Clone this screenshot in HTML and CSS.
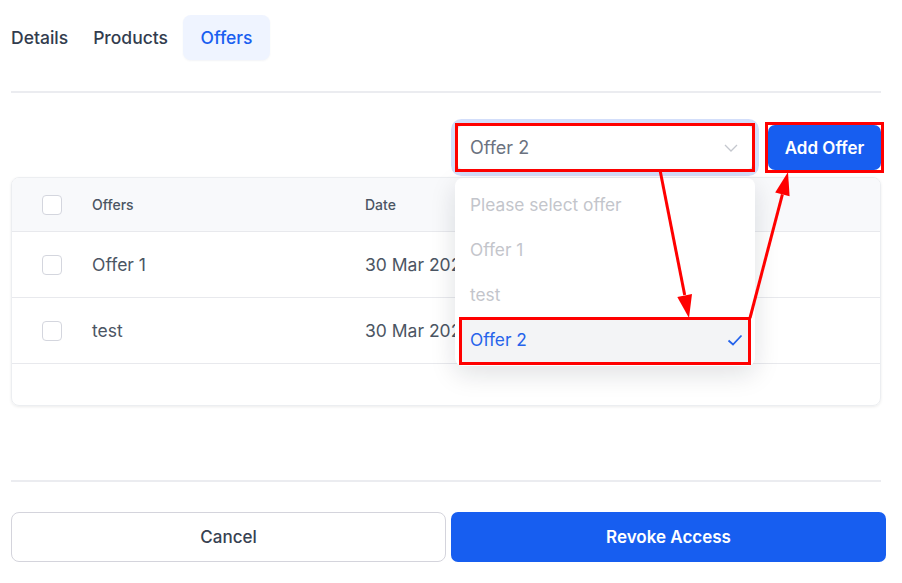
FILE: index.html
```html
<!DOCTYPE html>
<html lang="en">
<head>
  <meta charset="UTF-8">
  <meta name="viewport" content="width=device-width, initial-scale=1">
  <title>Offers</title>
  <link rel="stylesheet" href="styles.css">
</head>
<body>

  <div class="page">
    <!-- tabs -->
    <div class="tabs">
      <span class="tab">Details</span>
      <span class="tab">Products</span>
      <span class="tab active">Offers</span>
    </div>

    <div class="divider"></div>

    <!-- select + add -->
    <div class="toolbar">
      <div class="select-wrap">
        <div class="select marked">
          <span>Offer 2</span>
          <svg class="chevron" width="14" height="8" viewBox="0 0 14 8"><path d="M1 1l6 6 6-6" fill="none" stroke="#c4c7ce" stroke-width="1.3"/></svg>
        </div>
        <ul class="dropdown">
          <li class="placeholder">Please select offer</li>
          <li>Offer 1</li>
          <li>test</li>
          <li class="selected">
            <span>Offer 2</span>
            <svg width="16" height="12" viewBox="0 0 16 12"><path d="M1.5 6.5l4.5 4 8.5-9" fill="none" stroke="#2563eb" stroke-width="1.8"/></svg>
          </li>
        </ul>
      </div>
      <button class="btn-primary add-btn marked">Add Offer</button>
    </div>

    <!-- table -->
    <div class="card">
      <div class="row head">
        <span class="check"></span>
        <span class="cell-name">Offers</span>
        <span class="cell-date">Date</span>
      </div>
      <div class="row">
        <span class="check"></span>
        <span class="cell-name">Offer 1</span>
        <span class="cell-date">30 Mar 2025</span>
      </div>
      <div class="row">
        <span class="check"></span>
        <span class="cell-name">test</span>
        <span class="cell-date">30 Mar 2025</span>
      </div>
      <div class="row empty"></div>
    </div>

    <div class="divider bottom"></div>

    <div class="footer">
      <button class="btn-outline">Cancel</button>
      <button class="btn-primary">Revoke Access</button>
    </div>
  </div>

  <!-- annotation arrows -->
  <svg class="arrows" width="902" height="583" viewBox="0 0 902 583">
    <line x1="660" y1="170" x2="684.7" y2="295" stroke="#ff0000" stroke-width="3"/>
    <polygon points="692,294 677.3,296.9 689,318" fill="#ff0000"/>
    <line x1="750" y1="318" x2="782.4" y2="194.3" stroke="#ff0000" stroke-width="3"/>
    <polygon points="789.6,196.2 775.2,192.4 788,172" fill="#ff0000"/>
  </svg>

</body>
</html>
```

FILE: styles.css
```css
body {
  font-family: Inter, "Noto Sans", sans-serif;
  margin: 0;
  padding: 0;
  background: #fff;
  color: #374151;
}
ul {
  list-style: none;
  margin: 0;
  padding: 0;
}
button {
  font-family: inherit;
  cursor: pointer;
}
.page {
  width: 870px;
  padding-left: 11px;
}

/* tabs */
.tabs {
  display: flex;
  gap: 3px;
  margin-top: 15px;
}
.tab {
  height: 45px;
  line-height: 46px;
  padding: 0 11px;
  font-size: 17.5px;
  font-weight: 500;
  color: #323c4e;
  border-radius: 8px;
}
.tab:first-child {
  padding-left: 0;
}
.tab.active {
  margin-left: 1px;
  padding: 0 17.5px;
  background: #eff4ff;
  color: #1a5ff0;
  box-shadow: 0 1px 2px rgba(30, 60, 120, 0.06);
}

.divider {
  height: 2px;
  background: #ebecf0;
  margin-top: 31px;
}
.divider.bottom {
  margin-top: 74px;
}

/* toolbar */
.toolbar {
  display: flex;
  justify-content: flex-end;
  align-items: center;
  gap: 16px;
  margin-top: 32px;
}
.select-wrap {
  position: relative;
}
.select {
  width: 270px;
  height: 43px;
  padding: 0 12px;
  display: flex;
  align-items: center;
  justify-content: space-between;
  background: #fff;
  border-radius: 4px;
  font-size: 18px;
  color: #6b7280;
  box-shadow: 0 0 0 7px #d3defa;
}
.chevron {
  margin-right: 2px;
}
/* red annotation boxes */
.marked {
  position: relative;
}
.marked::after {
  content: "";
  position: absolute;
  top: -3px;
  left: -3px;
  right: -3px;
  bottom: -3px;
  border: 3px solid #ff0000;
  pointer-events: none;
}
.btn-primary {
  background: #175ef0;
  color: #fff;
  border: none;
  border-radius: 7px;
  font-size: 17px;
  font-weight: 600;
}
.add-btn {
  width: 113px;
  height: 45px;
}

/* dropdown */
.dropdown {
  position: absolute;
  top: 52px;
  left: -3px;
  width: 300px;
  padding: 4px 0 4px;
  background: #fff;
  border-radius: 8px;
  box-shadow: 0 8px 26px rgba(15, 23, 42, 0.13);
  z-index: 2;
}
.dropdown li {
  height: 45px;
  margin: 0 4px;
  padding: 0 11px;
  display: flex;
  align-items: center;
  justify-content: space-between;
  font-size: 17.3px;
  color: #c3c5cb;
}
.dropdown li.selected {
  padding-bottom: 3px;
  margin-bottom: -3px;
  background: #f3f4f6;
  color: #2563eb;
  box-shadow: inset 0 0 0 3px #ff0000;
}
.dropdown li.selected svg {
  margin-right: -3px;
}

/* table */
.card {
  margin-top: 7px;
  border: 1px solid #eceef1;
  border-radius: 8px;
  box-shadow: 0 1px 3px rgba(0, 0, 0, 0.08);
  overflow: hidden;
}
.row {
  display: flex;
  align-items: center;
  height: 65px;
  border-bottom: 1px solid #e8e9ed;
  font-size: 17.5px;
  color: #4b5563;
}
.row.head {
  height: 53px;
  background: #f8f9fb;
  font-size: 14px;
  font-weight: 500;
}
.row.empty {
  height: 41px;
  border-bottom: none;
}
.check {
  width: 18px;
  height: 18px;
  border: 1px solid #d4d6de;
  border-radius: 4px;
  background: #fff;
  margin-left: 30px;
}
.cell-name {
  margin-left: 30px;
  width: 273px;
}

/* footer */
.footer {
  width: 875px;
  display: grid;
  grid-template-columns: 1fr 1fr;
  gap: 5px;
  margin-top: 30px;
}
.footer button {
  height: 50px;
  font-size: 17px;
}
.btn-outline {
  background: #fff;
  border: 1px solid #d4d4dc;
  border-radius: 8px;
  color: #374151;
  font-weight: 500;
}

.arrows {
  position: absolute;
  top: 0;
  left: 0;
  pointer-events: none;
  z-index: 3;
}
```
